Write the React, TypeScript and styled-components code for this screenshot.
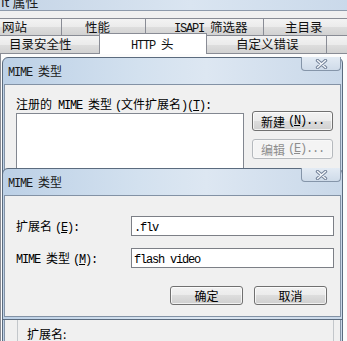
import React from 'react';
import styled, { createGlobalStyle } from 'styled-components';

const GlobalStyle = createGlobalStyle`
  html, body {
    margin: 0;
    padding: 0;
    background: #f0f0f0;
  }
`;

const Screen = styled.div`
  position: relative;
  width: 347px;
  height: 341px;
  overflow: hidden;
  display: flex;
  flex-direction: column;
  background: #f0f0f0;
  font-family: "Noto Sans CJK SC", "Liberation Sans", sans-serif;
  font-size: 12px;
  color: #000;
`;

// SimSun-like half width latin
const Lat = styled.span<{ $gap?: number }>`
  font-family: "Liberation Mono", monospace;
  font-size: 12px;
  letter-spacing: -1.2px;
  white-space: pre;
  margin-left: ${p => p.$gap || 0}px;
`;

const SheetCaption = styled.div`
  flex: none;
  height: 10px;
  overflow: hidden;
  border-bottom: 1px solid #8d9aab;
  background: linear-gradient(90deg, #c4d4e6 0%, #dae5f1 55%, #cad9ea 100%);
`;

const CaptionText = styled.div`
  margin-top: -6px;
  padding-left: 1px;
  font-size: 13px;
  line-height: 15px;
  color: #1e1e1e;
`;

const TabStrip = styled.div`
  flex: none;
  padding-top: 7px;
  display: flex;
  flex-direction: column;
`;

const TabRow = styled.div<{ $h: number }>`
  display: flex;
  align-items: flex-end;
  height: ${p => p.$h}px;
  margin-left: -1px;
`;

const Tab = styled.div<{ $w: number; $pad: number; $h: number; $active?: boolean }>`
  flex: none;
  position: relative;
  z-index: ${p => (p.$active ? 1 : 0)};
  box-sizing: border-box;
  width: ${p => p.$w}px;
  height: ${p => p.$h}px;
  margin-left: -1px;
  margin-bottom: ${p => (p.$active ? -1 : 0)}px;
  padding-left: ${p => p.$pad}px;
  border: 1px solid #898c95;
  border-bottom: none;
  background: ${p =>
    p.$active
      ? '#ffffff'
      : 'linear-gradient(#f3f3f3 0%, #ebebeb 50%, #dedede 50%, #d2d2d2 100%)'};
  font-size: 12.5px;
  line-height: ${p => p.$h - 2}px;
  white-space: nowrap;
  color: #111;
`;

const SheetPanel = styled.div`
  flex: 1;
  border-top: 1px solid #898c95;
  border-left: 1px solid #898c95;
  background: #fcfcfc;
`;

const Window = styled.div<{ $top: number; $height: number }>`
  position: absolute;
  left: 2px;
  top: ${p => p.$top}px;
  width: 341px;
  height: ${p => p.$height}px;
  box-sizing: border-box;
  display: flex;
  flex-direction: column;
  padding: 0 1px 2px 1px;
  border: 1px solid #5b6b7e;
  border-radius: 6px 6px 0 0;
  background: linear-gradient(90deg, #bcd0e6 0%, #d3e1ef 40%, #dde7f2 60%, #c9d8e9 100%);
`;

const TitleBar = styled.div`
  flex: none;
  height: 26px;
  display: flex;
  align-items: flex-start;
  justify-content: space-between;
`;

const TitleText = styled.div`
  padding-left: 4px;
  line-height: 26px;
  color: #1a1a1a;
`;

const CloseButton = styled.div`
  flex: none;
  width: 40px;
  height: 14px;
  margin-top: -1px;
  box-sizing: border-box;
  display: flex;
  align-items: center;
  justify-content: center;
  border: 1px solid #8595a9;
  border-top: none;
  border-radius: 0 0 4px 4px;
  background: linear-gradient(#e3ebf4, #cfdbe9);
`;

const Client = styled.div`
  flex: 1;
  min-height: 0;
  overflow: hidden;
  border: 1px solid #8392a5;
  background: #f0f0f0;
`;

const ListClient = styled.div`
  padding: 12px 0 0 11px;
`;

const Label = styled.div`
  height: 14px;
  line-height: 14px;
  white-space: nowrap;
`;

const ListRow = styled.div`
  display: flex;
  gap: 8px;
  align-items: flex-start;
`;

const ListBox = styled.div`
  flex: none;
  margin-top: 2px;
  width: 228px;
  height: 170px;
  box-sizing: border-box;
  border: 1px solid #828790;
  background: #fff;
`;

const ButtonColumn = styled.div`
  display: flex;
  flex-direction: column;
  gap: 8px;
`;

const PushButton = styled.div<{ $w: number; $h: number; $disabled?: boolean }>`
  box-sizing: border-box;
  width: ${p => p.$w}px;
  height: ${p => p.$h}px;
  display: flex;
  align-items: center;
  justify-content: center;
  border: 1px solid ${p => (p.$disabled ? '#b5b9bd' : '#707070')};
  border-radius: 3px;
  background: ${p =>
    p.$disabled
      ? '#f4f4f4'
      : 'linear-gradient(#f2f2f2 0%, #ebebeb 50%, #dddddd 50%, #cfcfcf 100%)'};
  box-shadow: inset 0 0 0 1px ${p => (p.$disabled ? '#f8f8f8' : 'rgba(255,255,255,0.7)')};
  color: ${p => (p.$disabled ? '#8d8d8d' : '#000')};
  white-space: nowrap;
`;

const GroupBox = styled.div`
  margin: 17px 0 0 1px;
  width: 317px;
  height: 80px;
  box-sizing: border-box;
  border: 1px solid #c3c7cb;
  padding: 26px 0 0 9px;
`;

const FormClient = styled.div`
  display: flex;
  flex-direction: column;
  padding: 20px 13px 0 11px;
`;

const FormGrid = styled.div`
  display: grid;
  grid-template-columns: 115px 203px;
  grid-auto-rows: 20px;
  row-gap: 12px;
  align-items: center;
`;

const TextInput = styled.div`
  height: 20px;
  box-sizing: border-box;
  border: 1px solid #7c7f86;
  background: #fff;
  padding-left: 2px;
  line-height: 18px;
  white-space: nowrap;
`;

const ButtonRow = styled.div`
  display: flex;
  justify-content: flex-end;
  gap: 11px;
  margin-top: 18px;
`;

const CloseGlyph = () => (
  <svg width="13" height="10" viewBox="0 0 13 10">
    <path d="M2.5 1.5 L10.5 8.5 M10.5 1.5 L2.5 8.5" stroke="#75839a" strokeWidth="3.4" strokeLinecap="round" />
    <path d="M2.5 1.5 L10.5 8.5 M10.5 1.5 L2.5 8.5" stroke="#f4f7fa" strokeWidth="1.4" strokeLinecap="round" />
  </svg>
);

const MimeTitle = () => (
  <TitleBar>
    <TitleText>
      <Lat>MIME </Lat>类型
    </TitleText>
    <CloseButton>
      <CloseGlyph />
    </CloseButton>
  </TitleBar>
);

export default function App() {
  return (
    <Screen>
      <GlobalStyle />
      <SheetCaption>
        <CaptionText>it 属性</CaptionText>
      </SheetCaption>
      <TabStrip>
        <TabRow $h={17}>
          <Tab $w={64} $pad={3} $h={17}>网站</Tab>
          <Tab $w={85} $pad={23} $h={17}>性能</Tab>
          <Tab $w={119} $pad={28} $h={17}>
            <Lat>ISAPI </Lat>筛选器
          </Tab>
          <Tab $w={100} $pad={21} $h={17}>主目录</Tab>
        </TabRow>
        <TabRow $h={18}>
          <Tab $w={102} $pad={10} $h={18}>目录安全性</Tab>
          <Tab $w={108} $pad={31} $h={21} $active>
            <Lat>HTTP </Lat>头
          </Tab>
          <Tab $w={121} $pad={29} $h={18}>自定义错误</Tab>
          <Tab $w={40} $pad={0} $h={18} />
        </TabRow>
      </TabStrip>
      <SheetPanel />

      <Window $top={57} $height={300}>
        <MimeTitle />
        <Client>
          <ListClient>
            <Label>
              注册的<Lat> MIME </Lat>类型<Lat $gap={3}>(</Lat>文件扩展名<Lat>)(<u>T</u>):</Lat>
            </Label>
            <ListRow>
              <ListBox />
              <ButtonColumn>
                <PushButton $w={81} $h={20}>
                  新建<Lat $gap={3}>(<u>N</u>)...</Lat>
                </PushButton>
                <PushButton $w={81} $h={20} $disabled>
                  编辑<Lat $gap={3}>(<u>E</u>)...</Lat>
                </PushButton>
              </ButtonColumn>
            </ListRow>
            <GroupBox>
              <Label>扩展名:</Label>
            </GroupBox>
          </ListClient>
        </Client>
      </Window>

      <Window $top={168} $height={152}>
        <MimeTitle />
        <Client>
          <FormClient>
            <FormGrid>
              <Label>
                扩展名<Lat $gap={3}>(<u>E</u>):</Lat>
              </Label>
              <TextInput>
                <Lat>.flv</Lat>
              </TextInput>
              <Label>
                <Lat>MIME </Lat>类型<Lat $gap={3}>(<u>M</u>):</Lat>
              </Label>
              <TextInput>
                <Lat>flash video</Lat>
              </TextInput>
            </FormGrid>
            <ButtonRow>
              <PushButton $w={73} $h={19}>确定</PushButton>
              <PushButton $w={73} $h={19}>取消</PushButton>
            </ButtonRow>
          </FormClient>
        </Client>
      </Window>
    </Screen>
  );
}
